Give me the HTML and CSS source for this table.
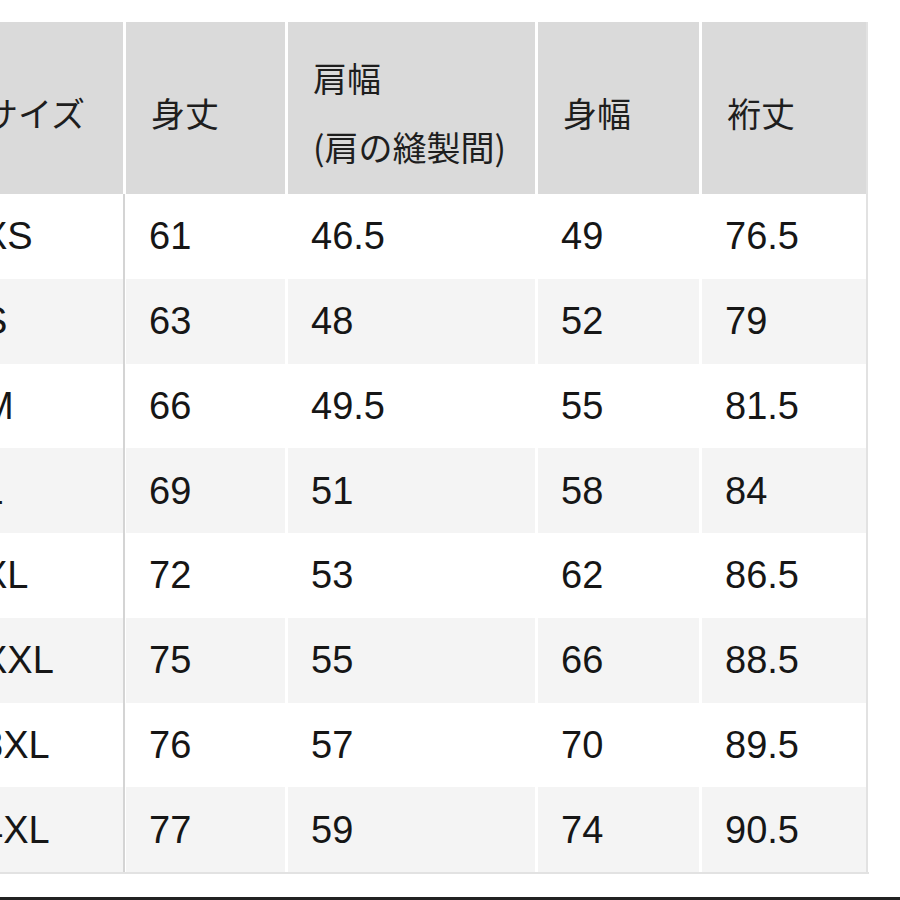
FILE: index.html
```html
<!DOCTYPE html>
<html lang="ja">
<head>
<meta charset="utf-8">
<title>サイズ表</title>
<link rel="stylesheet" href="styles.css">
</head>
<body>
<div class="page">
  <table class="size-table">
    <colgroup>
      <col class="c1"><col class="c2"><col class="c3"><col class="c4"><col class="c5">
    </colgroup>
    <thead>
      <tr>
        <th class="first">サイズ</th>
        <th>身丈</th>
        <th>肩幅<br>(肩の縫製間)</th>
        <th>身幅</th>
        <th class="last">裄丈</th>
      </tr>
    </thead>
    <tbody>
      <tr><td class="first">XS</td><td>61</td><td>46.5</td><td>49</td><td class="last">76.5</td></tr>
      <tr class="alt"><td class="first">S</td><td>63</td><td>48</td><td>52</td><td class="last">79</td></tr>
      <tr><td class="first">M</td><td>66</td><td>49.5</td><td>55</td><td class="last">81.5</td></tr>
      <tr class="alt"><td class="first">L</td><td>69</td><td>51</td><td>58</td><td class="last">84</td></tr>
      <tr><td class="first">XL</td><td>72</td><td>53</td><td>62</td><td class="last">86.5</td></tr>
      <tr class="alt"><td class="first">XXL</td><td>75</td><td>55</td><td>66</td><td class="last">88.5</td></tr>
      <tr><td class="first">3XL</td><td>76</td><td>57</td><td>70</td><td class="last">89.5</td></tr>
      <tr class="alt"><td class="first">4XL</td><td>77</td><td>59</td><td>74</td><td class="last">90.5</td></tr>
    </tbody>
  </table>
  <div class="bottom-bar"></div>
</div>
</body>
</html>
```

FILE: styles.css
```css
html, body {
  margin: 0;
  padding: 0;
  background: #ffffff;
}

.page {
  width: 900px;
  height: 900px;
  overflow: hidden;
  display: flex;
  flex-direction: column;
  padding-top: 22px;
  box-sizing: border-box;
}

.size-table {
  margin-left: -44px;
  border-collapse: separate;
  border-spacing: 3px 0;
  border: 0;
  border-bottom: 2px solid #e2e2e2;
  table-layout: fixed;
  width: 913px;
  color: #161616;
}

.c1 { width: 164px; }
.c2 { width: 159px; }
.c3 { width: 247px; }
.c4 { width: 161px; }
.c5 { width: 164px; }

.size-table th {
  background: #dadada;
  height: 172px;
  box-sizing: border-box;
  padding: 8px 0 0 25px;
  text-align: left;
  vertical-align: middle;
  font-family: "Noto Sans CJK JP", "Noto Sans", sans-serif;
  font-weight: 400;
  font-size: 34px;
  line-height: 69px;
  color: #1e1e1e;
}

.size-table td {
  height: 84.75px;
  box-sizing: border-box;
  padding: 0 0 0 23px;
  text-align: left;
  vertical-align: middle;
  font-family: "Liberation Sans", Arial, sans-serif;
  font-size: 38px;
  line-height: 40px;
  background: #ffffff;
}

.size-table tr.alt td {
  background: #f4f4f4;
}

.size-table td.first {
  box-shadow: 2px 0 0 0 #d4d4d4;
}

.size-table .last {
  box-shadow: 2px 0 0 0 #e2e2e2;
}

.bottom-bar {
  margin-top: auto;
  height: 3px;
  background: #222222;
}
```
